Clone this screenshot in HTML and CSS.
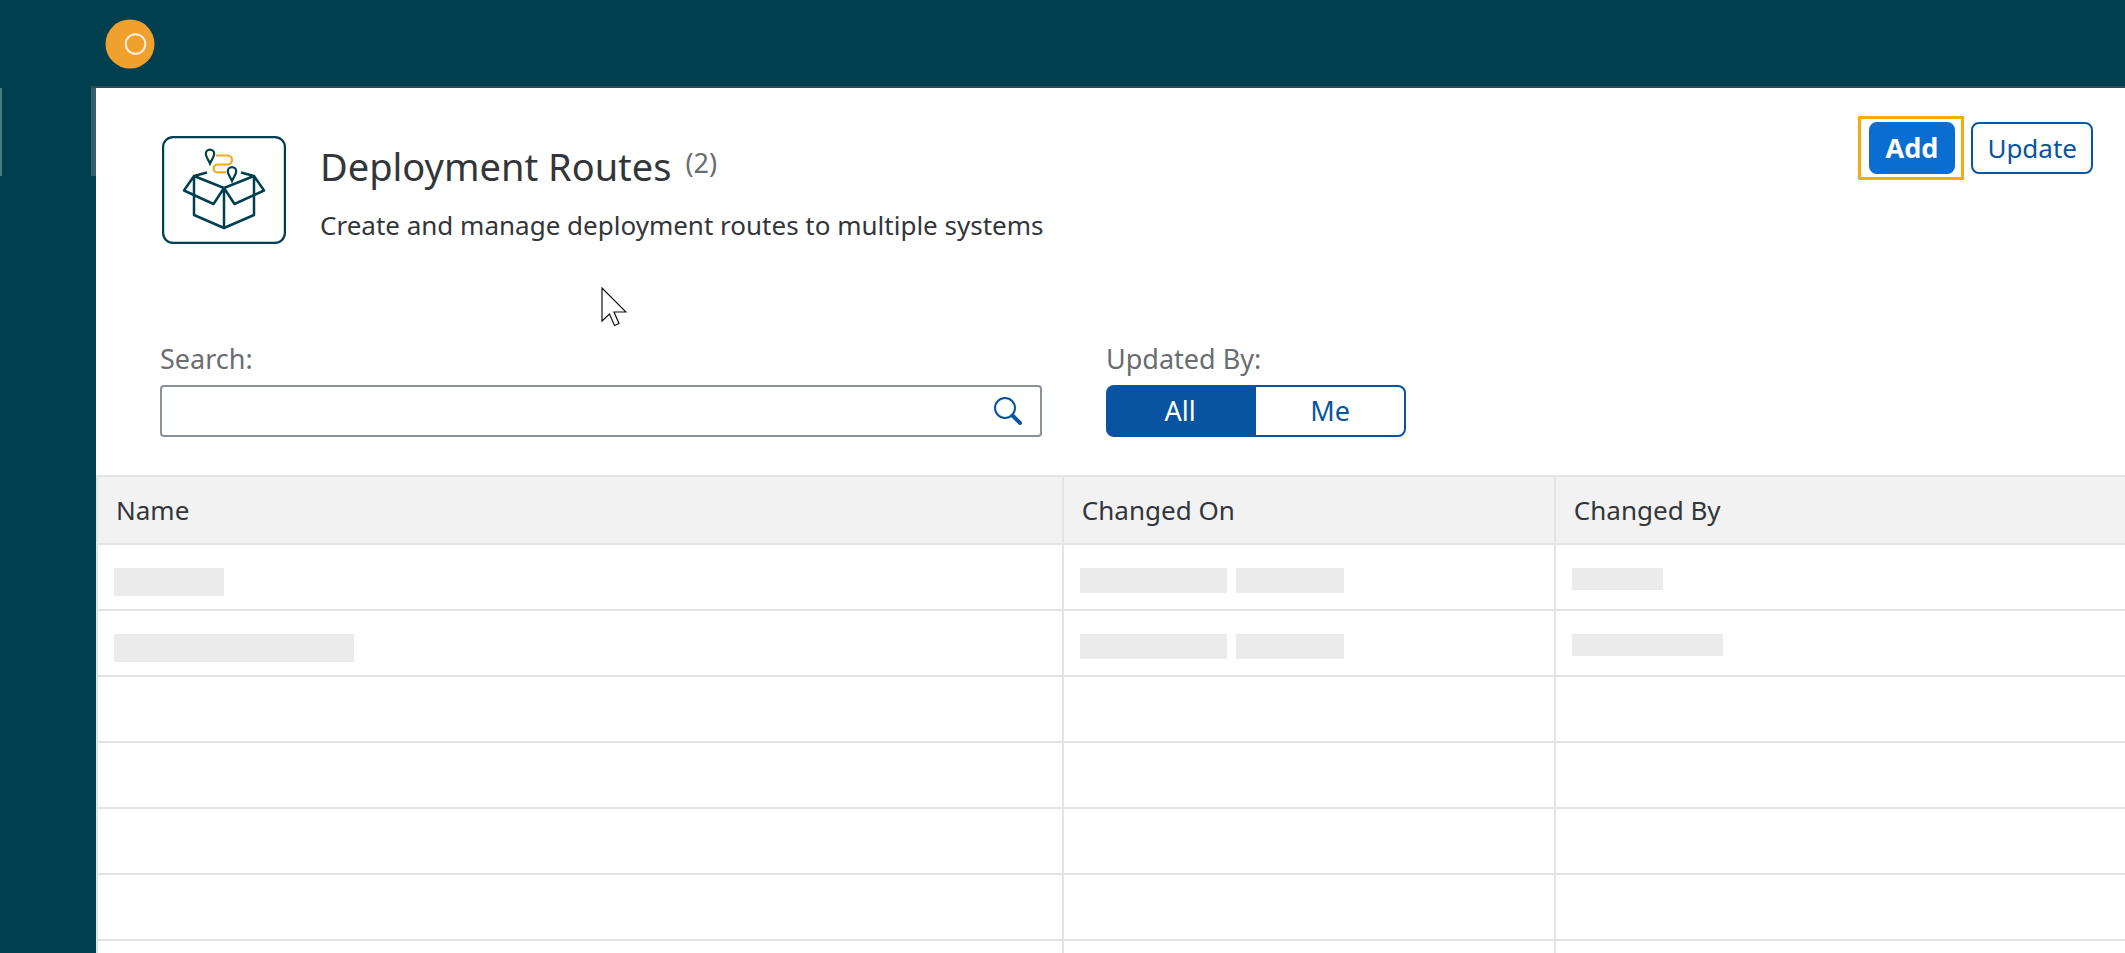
FILE: index.html
```html
<!DOCTYPE html>
<html lang="en">
<head>
<meta charset="utf-8">
<title>Deployment Routes</title>
<link rel="stylesheet" href="styles.css">
</head>
<body>
<div class="shell">
  <header class="topbar">
    <svg class="brand" viewBox="0 0 50 50" aria-hidden="true">
      <circle cx="25" cy="25" r="24.5" fill="#f0a02c"/>
      <circle cx="30.5" cy="25" r="9.8" fill="none" stroke="#fdeed8" stroke-width="2"/>
    </svg>
  </header>
  <nav class="sidebar" aria-label="Main"><span class="marker marker-start"></span><span class="marker marker-end"></span></nav>
  <main class="panel">
    <section class="heading">
      <svg class="app-icon" viewBox="0 0 124 108" fill="none" stroke="#003f50" stroke-width="2.5" aria-hidden="true">
        <rect x="1.1" y="1.1" width="121.8" height="105.8" rx="10" stroke-width="2.2"/>
        <path d="M54 19.5h11.5a4.3 4.3 0 0 1 0 9H55.500a3.800 3.800 0 0 0 0 7.800H64" stroke="#f3a91c" stroke-width="2.200"/>
        <path d="M48 27.500C46 23 43.800 21 43.800 17.800a4.200 4.200 0 0 1 8.400 0C52.200 21 50 23 48 27.500z" stroke-width="2.200"/>
        <path d="M70 45C68 40.500 65.800 38.500 65.800 35.300a4.200 4.200 0 0 1 8.400 0C74.200 38.500 72 40.500 70 45z" stroke-width="2.200"/>
        <path d="M45 36.500 32 40 62 52 92 40 79 36.500M32 40 22 54.500 51.500 68 62 52 72.500 68 102 54.500 92 40M32 40V79L62 92 92 79V40M62 52V92" stroke-linejoin="round"/>
      </svg>
      <div class="titles">
        <h1 class="title">Deployment Routes <span class="count">(2)</span></h1>
        <p class="subtitle">Create and manage deployment routes to multiple systems</p>
      </div>
      <div class="actions">
        <span class="highlight"><button class="btn btn-primary" type="button">Add</button></span>
        <button class="btn" type="button">Update</button>
      </div>
    </section>
    <form class="filters">
      <div class="field field-search">
        <label class="label" for="search">Search:</label>
        <div class="searchbox">
          <input class="search-input" id="search" type="text">
          <button class="search-btn" type="button" aria-label="Search">
            <svg class="search-icon" viewBox="0 0 28 28" fill="none" stroke="#0854a0" aria-hidden="true">
              <circle cx="11" cy="11" r="10" stroke-width="2"/>
              <path d="M18.500 18.500 26 26" stroke-width="4" stroke-linecap="round"/>
            </svg>
          </button>
        </div>
      </div>
      <div class="field" role="group" aria-labelledby="updated-by">
        <span class="label" id="updated-by">Updated By:</span>
        <div class="segments">
          <button class="segment segment-on" type="button" aria-pressed="true">All</button>
          <button class="segment" type="button" aria-pressed="false">Me</button>
        </div>
      </div>
    </form>
    <table class="routes">
      <colgroup><col class="col-name"><col class="col-on"><col></colgroup>
      <thead><tr><th>Name</th><th>Changed On</th><th>Changed By</th></tr></thead>
      <tbody>
        <tr>
          <td><div class="bars"><span class="bar bar-tall w-110"></span></div></td>
          <td><div class="bars"><span class="bar w-147"></span><span class="bar w-108"></span></div></td>
          <td><div class="bars"><span class="bar bar-short w-91"></span></div></td>
        </tr>
        <tr>
          <td><div class="bars"><span class="bar bar-tall w-240"></span></div></td>
          <td><div class="bars"><span class="bar w-147"></span><span class="bar w-108"></span></div></td>
          <td><div class="bars"><span class="bar bar-short w-151"></span></div></td>
        </tr>
        <tr><td></td><td></td><td></td></tr>
        <tr><td></td><td></td><td></td></tr>
        <tr><td></td><td></td><td></td></tr>
        <tr><td></td><td></td><td></td></tr>
        <tr><td></td><td></td><td></td></tr>
      </tbody>
    </table>
  </main>
</div>
<svg class="pointer" viewBox="0 0 26 40" fill="#fff" stroke="#111" stroke-width="1.200" aria-hidden="true">
  <path d="M1 1V34L8.500 27 13.500 38.500 18 36.500 13 25H25z"/>
</svg>
</body>
</html>
```

FILE: styles.css
```css
* { box-sizing: border-box; }

body {
  margin: 0;
  background: #003f50;
  color: #32363a;
  font-family: "Noto Sans", sans-serif;
  font-size: 26px;
  line-height: 36px;
}

button, input { font: inherit; }

.shell {
  display: grid;
  grid-template: 88px 1fr / 96px 1fr;
  height: 100vh;
  overflow: hidden;
}

.topbar {
  grid-column: 1 / -1;
  display: flex;
  align-items: center;
  padding-left: 105px;
}
.brand { width: 50px; height: 50px; }

.sidebar { display: flex; justify-content: space-between; }
.marker { height: 88px; background: #507b88; }
.marker-start { width: 2px; }
.marker-end { width: 5px; background: #335f70; box-shadow: 0 -2px 0 #304a5c; }

.panel { background: #fff; min-width: 0; box-shadow: 0 -2px 0 #304a5c; }

.heading {
  display: flex;
  align-items: flex-start;
  height: 253px;
  padding: 48px 32px 0 66px;
}
.app-icon { width: 124px; height: 108px; flex: none; }
.titles { flex: 1; padding-left: 34px; }
.title {
  display: flex;
  gap: 14px;
  margin: 0;
  font-size: 38px;
  font-weight: 400;
  line-height: 60px;
}
.count { color: #6a6d70; font-size: 27px; line-height: 54px; }
.subtitle { margin: 11px 0 0; }

.actions { display: flex; align-items: center; gap: 7px; margin-top: -20px; }
.highlight { display: flex; padding: 3px 6px 3px 8px; border: 3px solid #f5ab0b; }
.btn {
  height: 52px;
  padding: 0 14px;
  border: 2px solid #0854a0;
  border-radius: 8px;
  background: #fff;
  color: #0854a0;
}
.btn-primary { padding: 0 15px; border-color: #0a6ed1; background: #0a6ed1; color: #fff; font-size: 27px; font-weight: 700; }

.filters { display: flex; gap: 64px; margin: 0; padding: 0 64px 38px; font-size: 27px; }
.field { display: flex; flex-direction: column; gap: 8px; }
.field-search { flex: 0 1 882px; }
.label { color: #6a6d70; }
.searchbox {
  display: flex;
  height: 52px;
  border: 2px solid #89919a;
  border-radius: 4px;
}
.search-input { flex: 1; min-width: 0; padding: 0 16px; border: 0; background: none; }
.search-btn { display: flex; align-items: center; padding: 0 18px; border: 0; background: none; }
.search-icon { width: 28px; height: 28px; }

.segments { display: flex; }
.segment {
  width: 150px;
  height: 52px;
  padding: 0;
  border: 2px solid #0854a0;
  border-left: 0;
  border-radius: 0 8px 8px 0;
  background: #fff;
  color: #0854a0;
}
.segment-on { border-radius: 8px 0 0 8px; background: #0854a0; color: #fff; }

.routes {
  width: 100%;
  table-layout: fixed;
  border-collapse: separate;
  border-spacing: 0;
  border-top: 2px solid #e4e4e4;
}
.col-name { width: 47.7%; }
.col-on { width: 24.25%; }
.routes th, .routes td {
  height: 66px;
  padding: 0 16px;
  border-right: 2px solid #e4e4e4;
  border-bottom: 2px solid #e4e4e4;
  text-align: left;
  font-weight: 400;
}
.routes th:first-child, .routes td:first-child { border-left: 2px solid #e4e4e4; }
.routes th:last-child, .routes td:last-child { border-right: 0; }
.routes th { height: 68px; padding: 0 18px; background: #f2f2f2; }

.bars { display: flex; align-items: flex-start; gap: 9px; height: 28px; margin-top: 10px; }
.bar { height: 25px; background: #ebebeb; }
.bar-tall { height: 28px; }
.bar-short { height: 22px; }
.w-91 { width: 91px; }
.w-108 { width: 108px; }
.w-110 { width: 110px; }
.w-147 { width: 147px; }
.w-151 { width: 151px; }
.w-240 { width: 240px; }

.pointer { position: absolute; left: 601px; top: 287px; width: 26px; height: 40px; }
```
